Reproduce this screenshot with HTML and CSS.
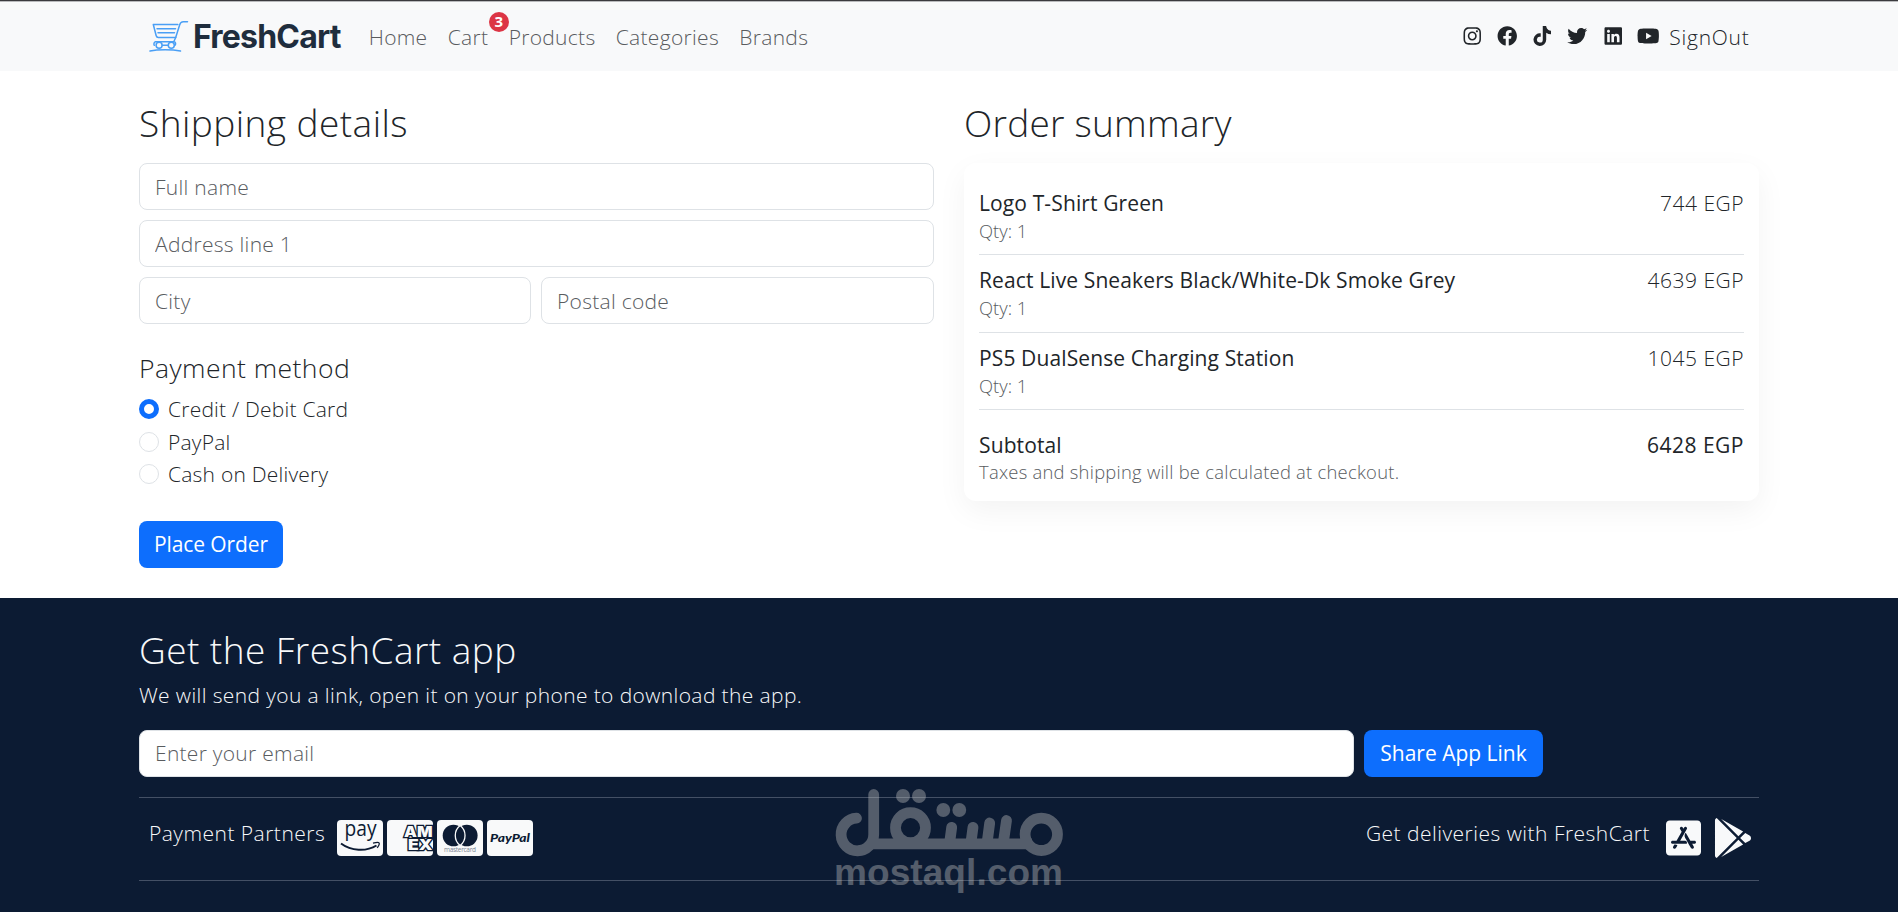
FILE: index.html
```html
<!DOCTYPE html>
<html lang="en">
  <head>
    <meta charset="UTF-8" />
    <meta name="viewport" content="width=device-width, initial-scale=1.0" />
    <title>FreshCart</title>
    <link rel="stylesheet" href="styles.css">
  </head>
  <body>
    <nav class="navbar">
      <div class="container nav-inner">
        <a class="brand" href="#">
          <svg class="brand-icon" viewBox="0 0 40 34" fill="none" stroke="#4a9ff5" stroke-width="1.5" stroke-linecap="round" stroke-linejoin="round">
            <path d="M38.5 1.8h-4.2c-2 0-3 1-3.6 3L26.7 17.5H9.3c-1.2 0-1.8-.6-2.1-1.7L4.3 4.5h24.5" />
            <path d="M8 8.7h18.5M9 12.8h16.5" />
            <path d="M26.7 17.5l-1.8 4M6.5 21.7h18.5c1.8 0 2 2.4 1 3.6M6.5 21.7c-1.5.5-2 2.2-1.2 3.6M13.5 25.3h5.3" />
            <circle cx="10.1" cy="25.3" r="3" />
            <circle cx="22.3" cy="25.3" r="3" />
            <path d="M1 31c8-1.7 22-1.7 30.5 0" />
          </svg>
          <span>FreshCart</span>
        </a>
        <ul class="nav-links">
          <li><a href="#">Home</a></li>
          <li><a class="cart-link" href="#">Cart<span class="badge">3</span></a></li>
          <li><a href="#">Products</a></li>
          <li><a href="#">Categories</a></li>
          <li><a href="#">Brands</a></li>
        </ul>
        <div class="nav-right">
          <svg class="social" viewBox="0 0 448 512"><path d="M224.1 141c-63.6 0-114.9 51.3-114.9 114.9s51.3 114.9 114.9 114.9S339 319.5 339 255.9 287.7 141 224.1 141zm0 189.6c-41.1 0-74.7-33.5-74.7-74.7s33.5-74.7 74.7-74.7 74.7 33.5 74.7 74.7-33.6 74.7-74.7 74.7zm146.4-194.3c0 14.9-12 26.8-26.8 26.8-14.9 0-26.8-12-26.8-26.8s12-26.8 26.8-26.8 26.8 12 26.8 26.8zm76.1 27.2c-1.7-35.9-9.9-67.7-36.2-93.9-26.2-26.2-58-34.4-93.9-36.2-37-2.1-147.9-2.1-184.9 0-35.8 1.7-67.6 9.9-93.9 36.1s-34.4 58-36.2 93.9c-2.1 37-2.1 147.9 0 184.9 1.7 35.9 9.9 67.7 36.2 93.9s58 34.4 93.9 36.2c37 2.1 147.9 2.1 184.9 0 35.9-1.7 67.7-9.9 93.9-36.2 26.2-26.2 34.4-58 36.2-93.9 2.1-37 2.1-147.8 0-184.8zM398.8 388c-7.8 19.6-22.9 34.7-42.6 42.6-29.5 11.7-99.5 9-132.1 9s-102.7 2.6-132.1-9c-19.6-7.8-34.7-22.9-42.6-42.6-11.7-29.5-9-99.5-9-132.1s-2.6-102.7 9-132.1c7.8-19.6 22.9-34.7 42.6-42.6 29.5-11.7 99.5-9 132.1-9s102.7-2.6 132.1 9c19.6 7.8 34.7 22.9 42.6 42.6 11.7 29.5 9 99.5 9 132.1s2.7 102.7-9 132.1z" /></svg>
          <svg class="social" viewBox="0 0 512 512"><path d="M504 256C504 119 393 8 256 8S8 119 8 256c0 123.78 90.69 226.38 209.25 245V327.69h-63V256h63v-54.64c0-62.15 37-96.48 93.67-96.48 27.14 0 55.52 4.84 55.52 4.84v61h-31.28c-30.8 0-40.41 19.12-40.41 38.73V256h68.78l-11 71.69h-57.78V501C413.31 482.38 504 379.78 504 256z" /></svg>
          <svg class="social" viewBox="0 0 448 512"><path d="M448,209.91a210.06,210.06,0,0,1-122.77-39.25V349.38A162.55,162.55,0,1,1,185,188.31V278.2a74.62,74.62,0,1,0,52.23,71.18V0l88,0a121.18,121.18,0,0,0,1.86,22.17h0A122.18,122.18,0,0,0,381,102.39a121.43,121.43,0,0,0,67,20.14Z" /></svg>
          <svg class="social" viewBox="0 0 512 512"><path d="M459.37 151.716c.325 4.548.325 9.097.325 13.645 0 138.72-105.583 298.558-298.558 298.558-59.452 0-114.68-17.219-161.137-47.106 8.447.974 16.568 1.299 25.34 1.299 49.055 0 94.213-16.568 130.274-44.832-46.132-.975-84.792-31.188-98.112-72.772 6.498.974 12.995 1.624 19.818 1.624 9.421 0 18.843-1.3 27.614-3.573-48.081-9.747-84.143-51.98-84.143-102.985v-1.299c13.969 7.797 30.214 12.67 47.431 13.319-28.264-18.843-46.781-51.005-46.781-87.391 0-19.492 5.197-37.36 14.294-52.954 51.655 63.675 129.3 105.258 216.365 109.807-1.624-7.797-2.599-15.918-2.599-24.04 0-57.828 46.782-104.934 104.934-104.934 30.213 0 57.502 12.67 76.67 33.137 23.715-4.548 46.456-13.32 66.599-25.34-7.798 24.366-24.366 44.833-46.132 57.827 21.117-2.273 41.584-8.122 60.426-16.243-14.292 20.791-32.161 39.308-52.628 54.253z" /></svg>
          <svg class="social" viewBox="0 0 448 512"><path d="M416 32H31.9C14.3 32 0 46.5 0 64.3v383.4C0 465.5 14.3 480 31.9 480H416c17.6 0 32-14.5 32-32.3V64.3c0-17.8-14.4-32.3-32-32.3zM135.4 416H69V202.2h66.5V416zm-33.2-243c-21.3 0-38.5-17.3-38.5-38.5S80.9 96 102.2 96c21.2 0 38.5 17.3 38.5 38.5 0 21.3-17.2 38.5-38.5 38.5zm282.1 243h-66.4V312c0-24.8-.5-56.7-34.5-56.7-34.6 0-39.9 27-39.9 54.9V416h-66.4V202.2h63.7v29.2h.9c8.9-16.8 30.6-34.5 62.9-34.5 67.2 0 79.7 44.3 79.7 101.9V416z" /></svg>
          <svg class="social" viewBox="0 0 576 512"><path d="M549.655 124.083c-6.281-23.65-24.787-42.276-48.284-48.597C458.781 64 288 64 288 64S117.22 64 74.629 75.486c-23.497 6.322-42.003 24.947-48.284 48.597-11.412 42.867-11.412 132.305-11.412 132.305s0 89.438 11.412 132.305c6.281 23.65 24.787 41.5 48.284 47.821C117.22 448 288 448 288 448s170.78 0 213.371-11.486c23.497-6.321 42.003-24.171 48.284-47.821 11.412-42.867 11.412-132.305 11.412-132.305s0-89.438-11.412-132.305zm-317.51 213.508V175.185l142.739 81.205-142.739 81.201z" /></svg>
          <a class="signout" href="#">SignOut</a>
        </div>
      </div>
    </nav>

    <main class="container checkout">
      <form class="shipping">
        <h3>Shipping details</h3>
        <div class="fields">
          <input class="wide" type="text" placeholder="Full name">
          <input class="wide" type="text" placeholder="Address line 1">
          <input type="text" placeholder="City">
          <input type="text" placeholder="Postal code">
        </div>
        <h5>Payment method</h5>
        <label class="check"><input type="radio" name="payment" checked><span>Credit / Debit Card</span></label>
        <label class="check"><input type="radio" name="payment"><span>PayPal</span></label>
        <label class="check"><input type="radio" name="payment"><span>Cash on Delivery</span></label>
        <button class="btn place-order" type="button">Place Order</button>
      </form>

      <section class="summary">
        <h3>Order summary</h3>
        <div class="card">
          <div class="item">
            <div>
              <div class="name">Logo T-Shirt Green</div>
              <div class="small qty">Qty: 1</div>
            </div>
            <div class="price">744 EGP</div>
          </div>
          <div class="item">
            <div>
              <div class="name">React Live Sneakers Black/White-Dk Smoke Grey</div>
              <div class="small qty">Qty: 1</div>
            </div>
            <div class="price">4639 EGP</div>
          </div>
          <div class="item">
            <div>
              <div class="name">PS5 DualSense Charging Station</div>
              <div class="small qty">Qty: 1</div>
            </div>
            <div class="price">1045 EGP</div>
          </div>
          <div class="subtotal">
            <span class="name">Subtotal</span>
            <span class="name price">6428 EGP</span>
          </div>
          <div class="small taxes">Taxes and shipping will be calculated at checkout.</div>
        </div>
      </section>
    </main>

    <footer>
      <div class="container">
        <h3>Get the FreshCart app</h3>
        <p>We will send you a link, open it on your phone to download the app.</p>
        <div class="share">
          <input type="email" placeholder="Enter your email">
          <button class="btn" type="button">Share App Link</button>
        </div>
        <div class="partners">
          <div class="partner-group">
            <span>Payment Partners</span>
            <div class="pay-cards">
              <svg viewBox="0 0 46 36">
                <rect width="46" height="36" rx="4" fill="#f8f9fa" />
                <text class="amazon" x="7.5" y="16" textLength="32" lengthAdjust="spacingAndGlyphs">pay</text>
                <path d="M4 23.5C14 31 29 32 39.500 25.500" fill="none" stroke="#0c1b33" stroke-width="2" />
                <path d="M36 23.2c3-.8 5.5-1 6-.4s-.3 3-1.8 5" fill="none" stroke="#0c1b33" stroke-width="1.3" />
              </svg>
              <svg viewBox="0 0 46 36">
                <rect width="46" height="36" rx="4" fill="#f8f9fa" />
                <text class="amex" x="17" y="16.5" textLength="28.5" lengthAdjust="spacingAndGlyphs">AM</text>
                <text class="amex" x="21" y="30" textLength="24.5" lengthAdjust="spacingAndGlyphs">EX</text>
              </svg>
              <svg viewBox="0 0 46 36">
                <rect width="46" height="36" rx="4" fill="#f8f9fa" />
                <circle cx="16.5" cy="15.5" r="10.8" fill="#0c1b33" />
                <circle cx="29.8" cy="15.5" r="10.8" fill="#0c1b33" />
                <path d="M23.150 5.500c6.500 5 6.500 15 0 20c-6.500-5-6.500-15 0-20z" fill="#0c1b33" stroke="#f8f9fa" stroke-width="1.3" />
                <text class="mastercard" x="7" y="32" textLength="32">mastercard</text>
              </svg>
              <svg viewBox="0 0 46 36">
                <rect width="46" height="36" rx="4" fill="#f8f9fa" />
                <text class="paypal" x="3" y="21.5" textLength="40" lengthAdjust="spacingAndGlyphs">PayPal</text>
              </svg>
            </div>
          </div>
          <div class="partner-group stores">
            <span>Get deliveries with FreshCart</span>
            <svg class="app-store" viewBox="0 0 448 512"><path d="M400 32H48C21.5 32 0 53.5 0 80v352c0 26.5 21.5 48 48 48h352c26.5 0 48-21.5 48-48V80c0-26.5-21.5-48-48-48zM127 384.5c-5.5 9.6-17.8 12.8-27.3 7.3-9.6-5.5-12.8-17.8-7.3-27.3l14.3-24.7c16.1-4.9 29.3-1.1 39.6 11.4L127 384.5zm138.9-53.9H84c-11 0-20-9-20-20s9-20 20-20h51l65.4-113.2-20.5-35.4c-5.5-9.6-2.2-21.8 7.3-27.3 9.6-5.5 21.8-2.2 27.3 7.3l8.9 15.4 8.9-15.4c5.5-9.6 17.8-12.8 27.3-7.3 9.6 5.5 12.8 17.8 7.3 27.3l-85.8 148.6h62.1c20.2 0 31.5 23.7 22.7 40zm98.1 0h-29l19.6 33.9c5.5 9.6 2.2 21.8-7.3 27.3-9.6 5.5-21.8 2.2-27.3-7.3-32.9-56.9-57.5-99.7-74-128.1-16.7-29-4.8-58 7.1-67.8 13.1 22.7 32.7 56.7 58.9 102h52c11 0 20 9 20 20 0 11.1-9 20-20 20z" /></svg>
            <svg class="google-play" viewBox="0 0 512 512"><path d="M325.3 234.3L104.6 13l280.8 161.2-60.1 60.1zM47 0C34 6.8 25.3 19.2 25.3 35.3v441.3c0 16.1 8.7 28.5 21.7 35.3l256.6-256L47 0zm425.2 225.6l-58.9-34.1-65.7 64.5 65.7 64.5 60.1-34.1c18-14.3 18-46.5-1.2-60.8zM104.6 499l280.8-161.2-60.1-60.1L104.6 499z" /></svg>
          </div>
        </div>
      </div>
    </footer>

    <!-- mostaql watermark -->
    <svg class="watermark" viewBox="0 0 230 110">
      <g fill="none" stroke="#c0c0c0" stroke-width="10.8" stroke-linecap="round">
        <circle cx="207.3" cy="48.3" r="16.2" />
        <circle cx="76.5" cy="41.7" r="15" />
        <path d="M22.5 32.2A16.3 16.3 0 1 0 39.7 48.5V8.5" />
        <path d="M36 57.8H198" stroke-linecap="butt" />
        <path d="M117.7 41.3l-2 15M139 41.3l-2 15M155.7 37l-2.5 19M172.5 34.5l-3 21" />
      </g>
      <g fill="#c0c0c0">
        <circle cx="69" cy="10" r="7" />
        <circle cx="85" cy="10" r="7" />
        <circle cx="109.3" cy="24" r="6.9" />
        <circle cx="125.3" cy="24" r="6.9" />
        <text x="0" y="99" textLength="229">mostaql.com</text>
      </g>
    </svg>
  </body>
</html>
```
FILE: styles.css
```css
* {
  box-sizing: border-box;
}

body {
  margin: 0;
  height: 912px;
  display: flex;
  flex-direction: column;
  position: relative;
  overflow: hidden;
  border-top: 1px solid #3b3a3e;
  font-family: "Open Sans", "Noto Sans", sans-serif;
  font-size: 21px;
  font-weight: 300;
  line-height: 30px;
  letter-spacing: 0.3px;
  color: #212529;
  background-color: #fff;
}

a {
  color: inherit;
  text-decoration: none;
}

.container {
  width: 1620px;
  margin: 0 auto;
}

h3 {
  margin: 0 0 19px;
  padding-top: 1px;
  font-size: 37px;
  font-weight: 300;
  line-height: 42px;
  letter-spacing: 0.45px;
}

h5 {
  margin: 29px 0 11px;
  font-size: 26.5px;
  font-weight: 300;
  line-height: 30px;
  letter-spacing: 0.45px;
}

/* navbar */
.navbar {
  height: 70px;
  border-top: 1px solid #b9babc;
  background-color: #f8f9fa;
}

.nav-inner {
  display: flex;
  align-items: center;
  height: 69px;
  padding: 0 10px;
}

.brand {
  display: flex;
  align-items: center;
  gap: 4px;
  font-family: Inter, sans-serif;
  font-size: 32px;
  font-weight: 700;
  letter-spacing: -0.8px;
  color: #1f2d3d;
}

.brand-icon {
  width: 40px;
  height: 34px;
}

.nav-links {
  display: flex;
  gap: 20.3px;
  margin: 0 0 0 28px;
  padding: 0;
  list-style: none;
  color: #595b5e;
}

.cart-link {
  position: relative;
}

.badge {
  position: absolute;
  top: -11px;
  right: -20.5px;
  width: 20px;
  height: 20px;
  border-radius: 50%;
  background-color: #dc3545;
  color: #fff;
  font-size: 15px;
  font-weight: 700;
  line-height: 19px;
  letter-spacing: 0;
  text-align: center;
}

.nav-right {
  display: flex;
  align-items: center;
  gap: 12.6px;
  margin-left: auto;
}

.social {
  width: 22.5px;
  height: 20px;
  margin-bottom: 2px;
  fill: #212529;
}

.signout {
  margin: 0 -0.5px 0 -2.5px;
  letter-spacing: 0.75px;
}

/* checkout */
.checkout {
  display: grid;
  grid-template-columns: 795px 795px;
  gap: 30px;
  padding: 30px 0;
}

.fields {
  display: grid;
  grid-template-columns: 392px 1fr;
  gap: 10px;
}

.wide {
  grid-column: span 2;
}

input[type="text"],
input[type="email"] {
  height: 47px;
  width: 100%;
  padding: 0 15px;
  border: 1px solid #dee2e6;
  border-radius: 8px;
  font: inherit;
  letter-spacing: 0.28px;
  background-color: #fff;
}

input::placeholder {
  color: #595c5f;
  opacity: 1;
}

.check {
  display: flex;
  align-items: center;
  gap: 9px;
  margin-bottom: 2.5px;
  letter-spacing: 0.22px;
}

.check input {
  appearance: none;
  width: 20px;
  height: 20px;
  margin: 0;
  border: 1px solid #dee2e6;
  border-radius: 50%;
}

.check input:checked {
  border: 5px solid #0d6efd;
}

.btn {
  height: 47px;
  padding: 0;
  border: none;
  border-radius: 8px;
  font: inherit;
  font-weight: 400;
  letter-spacing: 0;
  color: #fff;
  background-color: #0d6efd;
}

.place-order {
  display: block;
  width: 144px;
  margin-top: 31.5px;
  letter-spacing: -0.1px;
}

/* order summary */
.summary h3 {
  letter-spacing: 0.25px;
}

.card {
  height: 338px;
  padding: 15px;
  border-radius: 12px;
  background-color: #fff;
  box-shadow: 0 10px 30px rgba(0, 0, 0, 0.05);
}

.item {
  display: flex;
  justify-content: space-between;
  padding: 10px 0;
  border-bottom: 1px solid #dee2e6;
}

.name {
  font-weight: 500;
  letter-spacing: 0.12px;
}

.price {
  letter-spacing: 0.5px;
}

.small {
  font-size: 18.4px;
  line-height: 26.25px;
  letter-spacing: 0.25px;
  color: #595c5f;
}

.qty {
  letter-spacing: 0;
}

.subtotal {
  display: flex;
  justify-content: space-between;
  margin-top: 20px;
}

.taxes {
  margin-top: -1px;
}

/* footer */
footer {
  flex: 1;
  padding-top: 30px;
  background-color: #0c1b33;
  color: #f8f9fa;
}

footer h3 {
  margin-bottom: 9px;
}

footer p {
  margin: 0 0 20px;
  letter-spacing: 0.38px;
}

.share {
  display: flex;
  gap: 10px;
}

.share input[type="email"] {
  width: 1215px;
}

.share .btn {
  width: 179px;
}

.partners {
  display: flex;
  justify-content: space-between;
  height: 84px;
  margin-top: 20px;
  padding: 20px 6px 0 10px;
  border-top: 1px solid #445065;
  border-bottom: 1px solid #445065;
  letter-spacing: 0.48px;
}

.partner-group {
  display: flex;
}

.pay-cards {
  display: flex;
  gap: 4px;
  margin: 2px 0 0 12px;
  letter-spacing: 0;
}

.pay-cards svg {
  width: 46px;
  height: 36px;
}

.amazon {
  font-size: 21px;
  font-weight: 400;
  fill: #0c1b33;
}

.amex {
  font-family: Inter, sans-serif;
  font-size: 14px;
  font-weight: 900;
  fill: #f8f9fa;
  stroke: #0c1b33;
  stroke-width: 2.4px;
  paint-order: stroke;
}

.mastercard {
  font-size: 6.5px;
  font-weight: 400;
  fill: #7b8494;
}

.paypal {
  font-family: Lato, sans-serif;
  font-size: 12px;
  font-style: italic;
  font-weight: 900;
  fill: #0c1b33;
}

.stores svg {
  height: 40px;
  fill: #f8f9fa;
}

.app-store {
  margin: 0 12px 0 16px;
}

.watermark {
  position: absolute;
  top: 785px;
  left: 834px;
  width: 230px;
  height: 110px;
  opacity: 0.4;
}

.watermark text {
  font-family: "Liberation Sans", sans-serif;
  font-size: 37px;
  font-weight: 700;
  letter-spacing: 0;
}
```
